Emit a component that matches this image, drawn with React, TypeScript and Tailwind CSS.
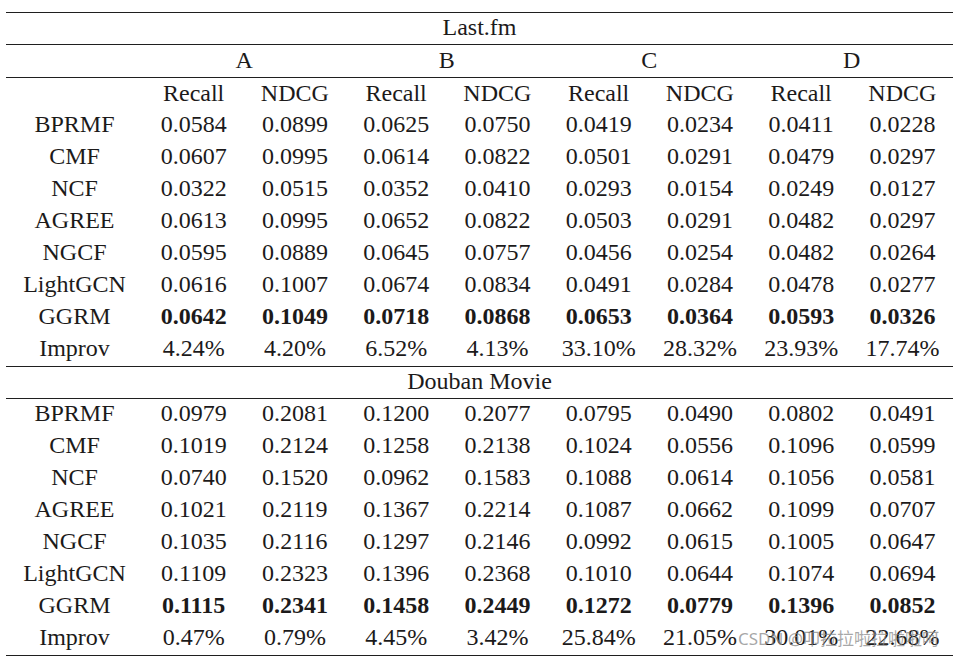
import React from 'react';

type Row = { name: string; values: string[]; bold?: boolean };

const lastfm: Row[] = [
  { name: 'BPRMF', values: ['0.0584', '0.0899', '0.0625', '0.0750', '0.0419', '0.0234', '0.0411', '0.0228'] },
  { name: 'CMF', values: ['0.0607', '0.0995', '0.0614', '0.0822', '0.0501', '0.0291', '0.0479', '0.0297'] },
  { name: 'NCF', values: ['0.0322', '0.0515', '0.0352', '0.0410', '0.0293', '0.0154', '0.0249', '0.0127'] },
  { name: 'AGREE', values: ['0.0613', '0.0995', '0.0652', '0.0822', '0.0503', '0.0291', '0.0482', '0.0297'] },
  { name: 'NGCF', values: ['0.0595', '0.0889', '0.0645', '0.0757', '0.0456', '0.0254', '0.0482', '0.0264'] },
  { name: 'LightGCN', values: ['0.0616', '0.1007', '0.0674', '0.0834', '0.0491', '0.0284', '0.0478', '0.0277'] },
  { name: 'GGRM', values: ['0.0642', '0.1049', '0.0718', '0.0868', '0.0653', '0.0364', '0.0593', '0.0326'], bold: true },
  { name: 'Improv', values: ['4.24%', '4.20%', '6.52%', '4.13%', '33.10%', '28.32%', '23.93%', '17.74%'] },
];

const douban: Row[] = [
  { name: 'BPRMF', values: ['0.0979', '0.2081', '0.1200', '0.2077', '0.0795', '0.0490', '0.0802', '0.0491'] },
  { name: 'CMF', values: ['0.1019', '0.2124', '0.1258', '0.2138', '0.1024', '0.0556', '0.1096', '0.0599'] },
  { name: 'NCF', values: ['0.0740', '0.1520', '0.0962', '0.1583', '0.1088', '0.0614', '0.1056', '0.0581'] },
  { name: 'AGREE', values: ['0.1021', '0.2119', '0.1367', '0.2214', '0.1087', '0.0662', '0.1099', '0.0707'] },
  { name: 'NGCF', values: ['0.1035', '0.2116', '0.1297', '0.2146', '0.0992', '0.0615', '0.1005', '0.0647'] },
  { name: 'LightGCN', values: ['0.1109', '0.2323', '0.1396', '0.2368', '0.1010', '0.0644', '0.1074', '0.0694'] },
  { name: 'GGRM', values: ['0.1115', '0.2341', '0.1458', '0.2449', '0.1272', '0.0779', '0.1396', '0.0852'], bold: true },
  { name: 'Improv', values: ['0.47%', '0.79%', '4.45%', '3.42%', '25.84%', '21.05%', '30.01%', '22.68%'] },
];

const grid = 'grid grid-cols-[137px_repeat(8,101.25px)] items-center';

const DataRow = ({ row }: { row: Row }) => (
  <div className={`${grid} h-[32px] pb-[4px]`}>
    <div className="text-center">{row.name}</div>
    {row.values.map((v, i) => (
      <div key={i} className={`text-center ${row.bold ? 'font-bold' : ''}`}>
        {v}
      </div>
    ))}
  </div>
);

const Rule = () => <div className="h-px bg-[#1f1f1f]" />;

export default function App() {
  return (
    <div className="relative w-[959px] h-[661px] bg-white pt-[12px] pl-[6px] font-['Liberation_Serif','DejaVu_Serif',serif] text-[24px] leading-none text-[#1c1a1a] overflow-hidden">
      <div className="w-[947px]">
        <Rule />
        <div className="h-[31px] pb-[3px] flex items-center justify-center">Last.fm</div>
        <Rule />
        <div className={`${grid} h-[32px] pb-[3px]`}>
          <div />
          {['A', 'B', 'C', 'D'].map((g) => (
            <div key={g} className="col-span-2 text-center">
              {g}
            </div>
          ))}
        </div>
        <Rule />
        <div className={`${grid} h-[32px] pb-[3px]`}>
          <div />
          {['A', 'B', 'C', 'D'].map((g) => (
            <React.Fragment key={g}>
              <div className="text-center">Recall</div>
              <div className="text-center">NDCG</div>
            </React.Fragment>
          ))}
        </div>
        {lastfm.map((r) => (
          <DataRow key={r.name} row={r} />
        ))}
        <Rule />
        <div className="h-[31px] pb-[3px] flex items-center justify-center">Douban Movie</div>
        <Rule />
        {douban.map((r) => (
          <DataRow key={r.name} row={r} />
        ))}
        <Rule />
      </div>

      {/* CSDN watermark */}
      <div className="absolute left-[738px] top-[630px] font-['Noto_Sans','Noto_Sans_CJK_SC',sans-serif] text-[17px] leading-none text-[#8a8a8a]/75 whitespace-nowrap">
        CSDN @叩拉拉啦拉啦啦呵
      </div>
    </div>
  );
}
